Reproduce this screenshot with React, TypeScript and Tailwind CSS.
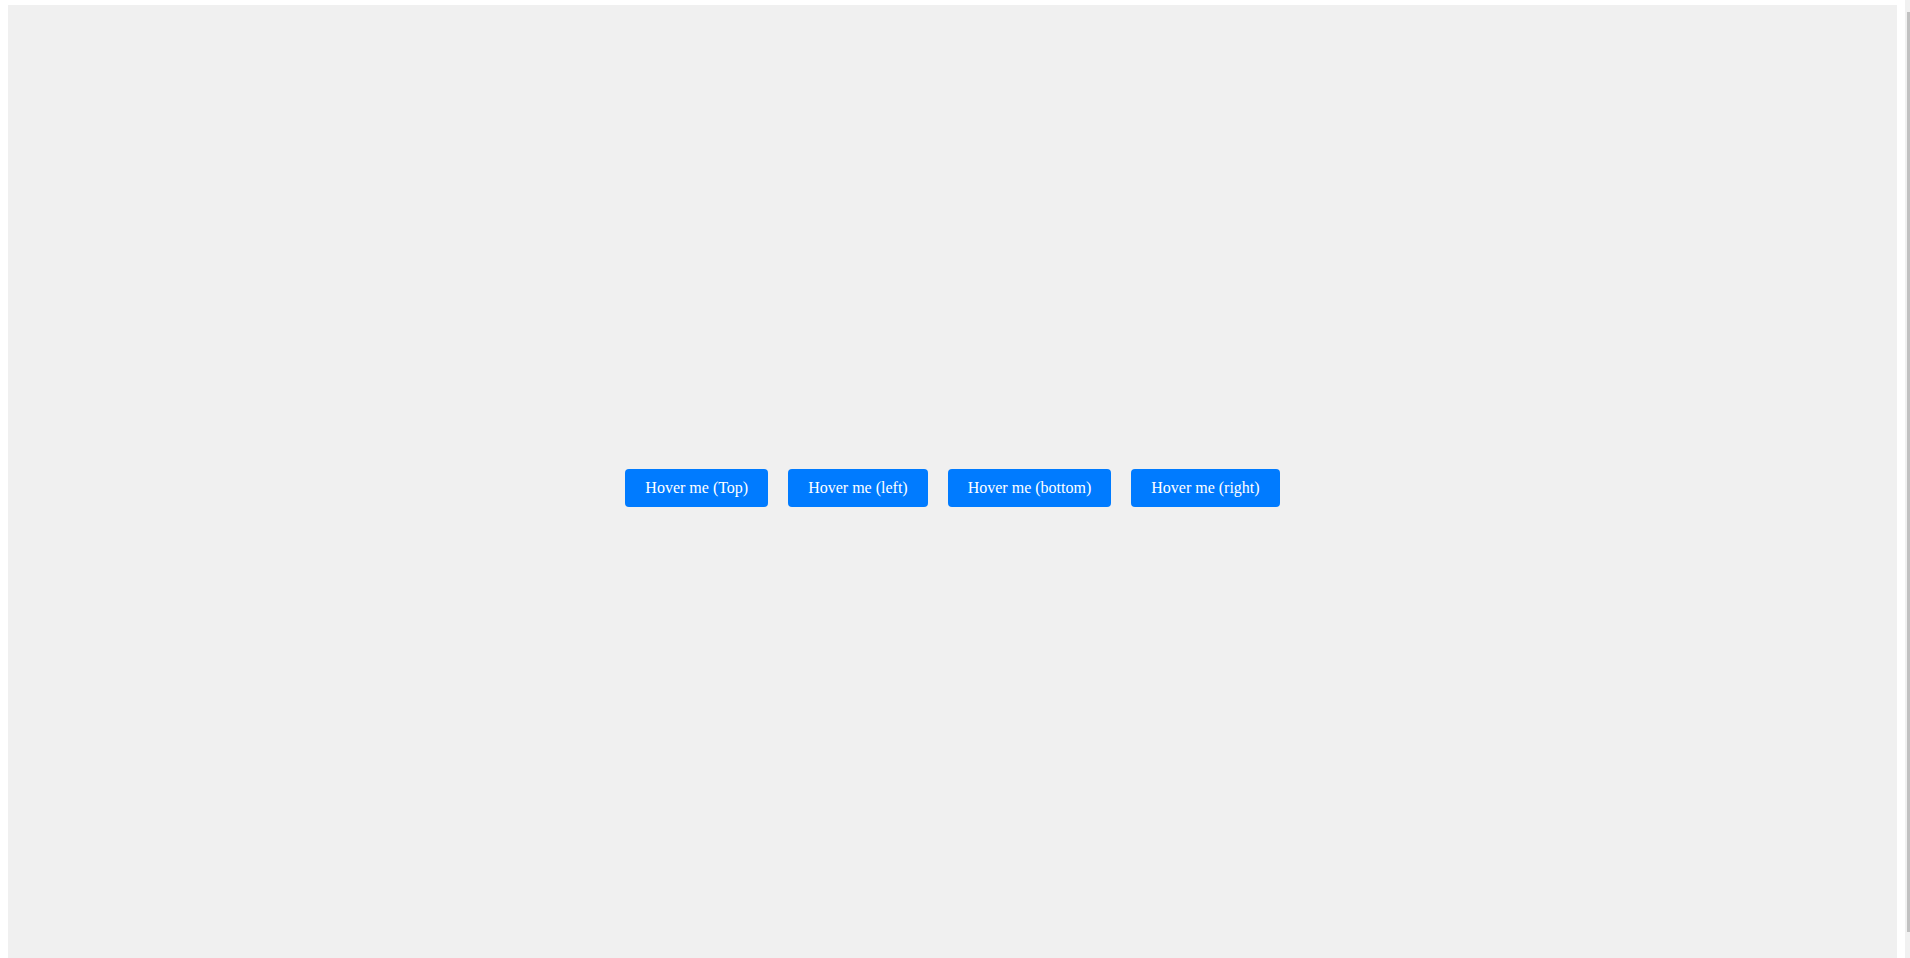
import { useState } from "react";

const buttons = [
  { label: "Hover me (Top)", tip: "Tooltip on top" },
  { label: "Hover me (left)", tip: "Tooltip on left" },
  { label: "Hover me (bottom)", tip: "Tooltip on bottom" },
  { label: "Hover me (right)", tip: "Tooltip on right" },
];

export default function App() {
  const [hovered, setHovered] = useState<number | null>(null);

  return (
    <div className="flex h-[958px] w-[1910px] overflow-hidden bg-white font-['Liberation_Serif',serif]">
      <div className="w-[8px] shrink-0" />
      <div className="mt-[5px] flex w-[1889px] shrink-0 items-center justify-center bg-[#f0f0f0] pt-[12px]">
        {buttons.map((b, i) => (
          <div key={b.label} className="relative mx-[10px]">
            <button
              onMouseEnter={() => setHovered(i)}
              onMouseLeave={() => setHovered(null)}
              className="rounded-[4px] bg-[#007bff] px-[20px] py-[10px] text-[16px] leading-[18px] text-white"
            >
              {b.label}
            </button>
            {hovered === i && (
              <span className="absolute bottom-full left-1/2 mb-2 -translate-x-1/2 whitespace-nowrap rounded bg-black/80 px-2 py-1 text-sm text-white">
                {b.tip}
              </span>
            )}
          </div>
        ))}
      </div>
      <div className="w-[8px] shrink-0" />
      {/* scrollbar strip */}
      <div className="flex w-[5px] shrink-0 flex-col bg-[#f1f1f1]">
        <div className="h-[12px]" />
        <div className="ml-[2px] h-[920px] bg-[#c1c1c1]" />
      </div>
    </div>
  );
}
